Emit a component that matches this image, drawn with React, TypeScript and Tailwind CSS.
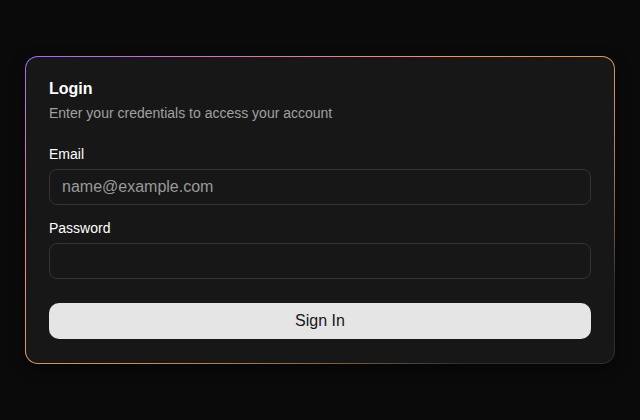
export default function App() {
  return (
    <div className="min-h-screen bg-[#0a0a0a] flex items-center justify-center font-['Liberation_Sans',Arial,sans-serif]">
      <div className="w-[590px] rounded-[13px] p-px bg-[radial-gradient(ellipse_farthest-corner_at_0_0,#9b6cf2_0%,#c86fd0_15%,#e07a9c_32%,#f0906a_50%,#d9985a_70%,#2e2e2e_88%)] shadow-[0_4px_14px_rgba(0,0,0,0.5)]">
        <div className="rounded-xl bg-[#171717] py-6 flex flex-col gap-6">
          <div className="px-[23px] flex flex-col gap-1.5">
            <h2 className="text-base leading-none font-bold text-white">Login</h2>
            <p className="text-sm text-[#a1a1a1]">Enter your credentials to access your account</p>
          </div>

          <form className="px-[23px] flex flex-col gap-6" onSubmit={(e) => e.preventDefault()}>
            <div className="flex flex-col gap-4">
              <div className="grid gap-2">
                <label className="text-sm leading-none font-medium text-white">Email</label>
                <input
                  type="email"
                  placeholder="name@example.com"
                  className="h-9 w-full rounded-lg border border-[#333333] bg-[#171717] px-3 text-base text-white placeholder:text-[#9a9a9a] outline-none"
                />
              </div>
              <div className="grid gap-2">
                <label className="text-sm leading-none font-medium text-white">Password</label>
                <input
                  type="password"
                  className="h-9 w-full rounded-lg border border-[#333333] bg-[#171717] px-3 text-base text-white outline-none"
                />
              </div>
            </div>
            <button type="submit" className="h-9 w-full rounded-[10px] bg-[#e5e5e5] text-base text-[#171717]">
              Sign In
            </button>
          </form>
        </div>
      </div>
    </div>
  );
}
